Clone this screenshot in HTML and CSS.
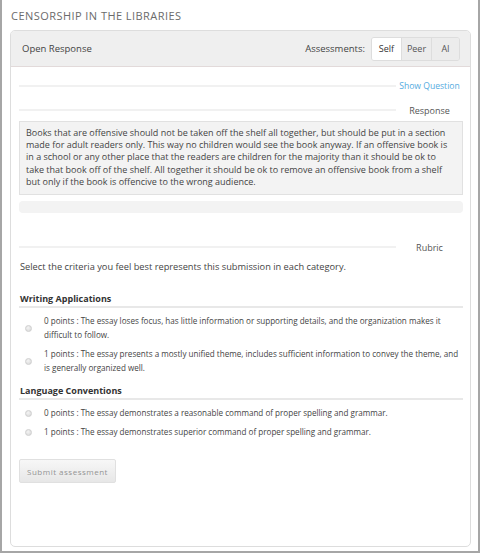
FILE: index.html
```html
<!DOCTYPE html>
<html>
<head>
<meta charset="utf-8">
<link rel="stylesheet" href="styles.css">
</head>
<body>
<div class="frame">
  <h1 class="title">CENSORSHIP IN THE LIBRARIES</h1>
  <div class="card">
    <div class="card-head">
      <span class="head-label">Open Response</span>
      <div class="assess">
        <span class="assess-label">Assessments:</span>
        <div class="btn-group">
          <span class="seg seg-active">Self</span>
          <span class="seg">Peer</span>
          <span class="seg">AI</span>
        </div>
      </div>
    </div>
    <div class="card-body">
      <div class="divider d-question">
        <span class="rule"></span>
        <a class="divider-label link">Show Question</a>
      </div>
      <div class="divider d-response">
        <span class="rule"></span>
        <span class="divider-label">Response</span>
      </div>
      <div class="response">Books that are offensive should not be taken off the shelf all together, but should be put in a section made for adult readers only. This way no children would see the book anyway. If an offensive book is in a school or any other place that the readers are children for the majority than it should be ok to take that book off of the shelf. All together it should be ok to remove an offensive book from a shelf but only if the book is offencive to the wrong audience.</div>
      <div class="bar"></div>
      <div class="divider d-rubric">
        <span class="rule"></span>
        <span class="divider-label">Rubric</span>
      </div>
      <p class="intro">Select the criteria you feel best represents this submission in each category.</p>

      <div class="criterion c-writing">
        <h2 class="crit-title">Writing Applications</h2>
        <div class="option opt-two">
          <span class="radio"></span>
          <span class="opt-text">0 points : The essay loses focus, has little information or supporting details, and the organization makes it difficult to follow.</span>
        </div>
        <div class="option opt-two">
          <span class="radio"></span>
          <span class="opt-text">1 points : The essay presents a mostly unified theme, includes sufficient information to convey the theme, and is generally organized well.</span>
        </div>
      </div>

      <div class="criterion c-language">
        <h2 class="crit-title">Language Conventions</h2>
        <div class="option opt-one">
          <span class="radio"></span>
          <span class="opt-text">0 points : The essay demonstrates a reasonable command of proper spelling and grammar.</span>
        </div>
        <div class="option opt-one">
          <span class="radio"></span>
          <span class="opt-text">1 points : The essay demonstrates superior command of proper spelling and grammar.</span>
        </div>
      </div>

      <button class="submit" type="button">Submit assessment</button>
    </div>
  </div>
</div>
</body>
</html>
```

FILE: styles.css
```css
* { box-sizing: border-box; }
html, body { margin: 0; padding: 0; background: #fff; }
body {
  font-family: "Open Sans", "Liberation Sans", sans-serif;
  color: #555;
}
.frame {
  width: 480px;
  height: 553px;
  border: 2px solid #a6a6a6;
  border-top: none;
  padding: 0 7px 4px 8px;
  display: flex;
  flex-direction: column;
}
.title {
  margin: 0;
  padding: 9px 0 0 1px;
  height: 30px;
  font-size: 11px;
  font-weight: 400;
  letter-spacing: 0.45px;
  color: #6b6b6b;
  line-height: 14px;
}
.card {
  flex: 1;
  border: 1px solid #ddd;
  border-radius: 5px;
  display: flex;
  flex-direction: column;
  overflow: hidden;
}
.card-head {
  height: 36px;
  background: #efefef;
  border-bottom: 1px solid #e2dada;
  display: flex;
  align-items: center;
  justify-content: space-between;
  padding: 0 10px 0 11px;
  font-size: 9.5px;
  color: #444;
}
.assess { display: flex; align-items: center; gap: 6px; }
.btn-group {
  display: flex;
  border: 1px solid #ddd;
  border-radius: 3px;
  overflow: hidden;
  height: 24px;
}
.seg {
  display: flex;
  align-items: center;
  justify-content: center;
  background: #ececec;
  border-left: 1px solid #ddd;
  font-size: 9px;
  color: #555;
}
.seg:nth-child(1) { width: 29px; border-left: none; background: #fff; color: #333; }
.seg:nth-child(2) { width: 30px; }
.seg:nth-child(3) { width: 28px; }
.card-body {
  flex: 1;
  padding: 0 7px 0 8px;
  display: flex;
  flex-direction: column;
}
.divider {
  display: flex;
  align-items: center;
  height: 14px;
}
.d-question { margin-top: 12px; }
.d-response { margin-top: 10px; }
.d-rubric { margin-top: 27px; }
.rule {
  flex: 1;
  height: 2px;
  background: #f1f1f1;
}
.divider-label {
  width: 67px;
  text-align: center;
  font-size: 9px;
  color: #555;
}
.link { color: #55abe0; font-size: 8.6px; }
.response {
  margin-top: 4px;
  background: #f3f3f3;
  border: 1px solid #e1e1e1;
  height: 74px;
  padding: 5px 6px;
  font-size: 9px;
  line-height: 12.2px;
  color: #444;
}
.bar {
  margin-top: 6px;
  height: 12px;
  background: #f3f3f3;
  border-radius: 4px;
}
.intro {
  margin: 7px 0 0 1px;
  font-size: 9.25px;
  line-height: 12px;
  color: #444;
}
.criterion { display: flex; flex-direction: column; }
.c-writing { margin-top: 20px; }
.c-language { margin-top: 10px; }
.crit-title {
  margin: 0;
  padding: 0 0 0 1px;
  font-size: 9px;
  font-weight: 700;
  color: #333;
  line-height: 12px;
  border-bottom: 2px solid #e8e8e8;
  height: 15px;
}
.option {
  display: flex;
  align-items: center;
  padding-left: 6px;
}
.opt-two { margin-top: 6px; }
.opt-two + .opt-two { margin-top: 5px; }
.opt-one { margin-top: 7px; height: 12px; }
.opt-one + .opt-one { margin-top: 7px; }
.radio {
  flex: none;
  width: 7px;
  height: 7px;
  border-radius: 50%;
  border: 1px solid #cfcfcf;
  background: radial-gradient(circle at 40% 35%, #f4f4f4, #d6d6d6);
  margin-right: 12px;
}
.opt-text {
  font-size: 8.1px;
  line-height: 14px;
  color: #444;
}
.submit {
  margin-top: 21px;
  align-self: flex-start;
  width: 97px;
  height: 24px;
  border: 1px solid #e0e0e0;
  border-radius: 2px;
  background: linear-gradient(#f7f7f7, #e7e7e7);
  font-family: "Open Sans", "Liberation Sans", sans-serif;
  font-size: 8px;
  letter-spacing: 0.5px;
  color: #949494;
  padding: 0;
}
```
